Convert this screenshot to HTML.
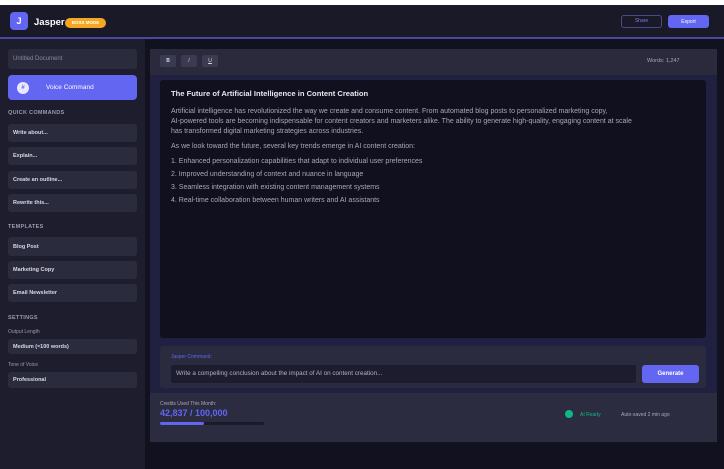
<!DOCTYPE html>
<html><head><style>
*{margin:0;padding:0;box-sizing:border-box}
body{width:724px;height:469px;background:#fff;font-family:"Liberation Sans",sans-serif;position:relative;overflow:hidden}
.a{position:absolute}
.hdr{left:0;top:5px;width:724px;height:32px;background:#191928}
.line{left:0;top:37px;width:724px;height:2px;background:#4a4a9a}
.side{left:0;top:39px;width:145px;height:430px;background:#1d1d2e}
.main{left:145px;top:39px;width:579px;height:430px;background:#11111f}
.item{left:8px;width:129px;background:#2b2b3e;border-radius:3px;color:#d8d8e4;font-size:5.5px;font-weight:bold;padding-left:5px;display:flex;align-items:center}
.lab{left:8px;color:#9a9ab0;font-size:5.5px;font-weight:bold;letter-spacing:.3px}
.p{color:#a8a8b8;font-size:7px;left:171px}
</style></head><body>
<div class="a hdr"></div>
<div class="a" style="left:10px;top:12px;width:18px;height:18px;background:#6366f1;border-radius:4px;color:#fff;font-size:9px;font-weight:bold;text-align:center;line-height:18px">J</div>
<div class="a" style="left:34px;top:17px;color:#fff;font-size:9.5px;font-weight:bold">Jasper</div>
<div class="a" style="left:65px;top:18px;width:41px;height:10px;background:#f5a623;border-radius:5px;color:#fff;font-size:4.5px;font-weight:bold;text-align:center;line-height:10px">BOSS MODE</div>
<div class="a" style="left:621px;top:15px;width:41px;height:13px;border:1px solid #4a4a8a;border-radius:3px;color:#7c7cf0;font-size:5px;text-align:center;line-height:11px;display:flex;align-items:center;justify-content:center">Share</div>
<div class="a" style="left:668px;top:15px;width:41px;height:13px;background:#6366f1;border-radius:3px;color:#fff;font-size:5px;display:flex;align-items:center;justify-content:center">Export</div>
<div class="a line"></div>
<div class="a side"></div>
<div class="a main"></div>

<div class="a item" style="top:49px;height:20px;color:#8a8aa0;font-weight:normal;font-size:6px">Untitled Document</div>
<div class="a" style="left:8px;top:75px;width:129px;height:25px;background:#6366f1;border-radius:4px"></div>
<div class="a" style="left:17px;top:82px;width:12px;height:12px;background:#e8e8ff;border-radius:50%;color:#6366f1;font-size:6px;text-align:center;line-height:12px;font-weight:bold">#</div>
<div class="a" style="left:46px;top:84px;color:#fff;font-size:6.5px">Voice Command</div>
<div class="a lab" style="top:110px">QUICK COMMANDS</div>
<div class="a item" style="top:124px;height:18px">Write about...</div>
<div class="a item" style="top:147px;height:18px">Explain...</div>
<div class="a item" style="top:171px;height:18px">Create an outline...</div>
<div class="a item" style="top:194px;height:18px">Rewrite this...</div>
<div class="a lab" style="top:224px">TEMPLATES</div>
<div class="a item" style="top:237px;height:19px">Blog Post</div>
<div class="a item" style="top:261px;height:18px">Marketing Copy</div>
<div class="a item" style="top:284px;height:18px">Email Newsletter</div>
<div class="a lab" style="top:315px">SETTINGS</div>
<div class="a" style="left:8px;top:329px;color:#9a9ab0;font-size:5px">Output Length</div>
<div class="a item" style="top:339px;height:15px">Medium (≈100 words)</div>
<div class="a" style="left:8px;top:362px;color:#9a9ab0;font-size:5px">Tone of Voice</div>
<div class="a item" style="top:372px;height:16px">Professional</div>

<div class="a" style="left:150px;top:49px;width:567px;height:26px;background:#2a2a3c"></div>
<div class="a" style="left:160px;top:55px;width:16px;height:12px;background:#3a3a50;border-radius:2px;color:#ddd;font-size:5px;font-weight:bold;text-align:center;line-height:12px">B</div>
<div class="a" style="left:181px;top:55px;width:16px;height:12px;background:#3a3a50;border-radius:2px;color:#ddd;font-size:5px;font-style:italic;text-align:center;line-height:12px">I</div>
<div class="a" style="left:202px;top:55px;width:16px;height:12px;background:#3a3a50;border-radius:2px;color:#ddd;font-size:5px;text-decoration:underline;text-align:center;line-height:12px">U</div>
<div class="a" style="left:647px;top:58px;color:#a8a8b8;font-size:5.5px">Words: 1,247</div>
<div class="a" style="left:150px;top:75px;width:567px;height:318px;background:#202040"></div>
<div class="a" style="left:160px;top:80px;width:546px;height:258px;background:#10101f;border-radius:3px"></div>
<div class="a" style="left:171px;top:89px;color:#e8e8f0;font-size:7.6px;font-weight:bold">The Future of Artificial Intelligence in Content Creation</div>
<div class="a p" style="top:107px;line-height:10px">Artificial intelligence has revolutionized the way we create and consume content. From automated blog posts to personalized marketing copy,<br>AI-powered tools are becoming indispensable for content creators and marketers alike. The ability to generate high-quality, engaging content at scale<br>has transformed digital marketing strategies across industries.</div>
<div class="a p" style="top:143px">As we look toward the future, several key trends emerge in AI content creation:</div>
<div class="a p" style="top:158px">1. Enhanced personalization capabilities that adapt to individual user preferences</div>
<div class="a p" style="top:171px">2. Improved understanding of context and nuance in language</div>
<div class="a p" style="top:184px">3. Seamless integration with existing content management systems</div>
<div class="a p" style="top:197px">4. Real-time collaboration between human writers and AI assistants</div>

<div class="a" style="left:160px;top:346px;width:546px;height:42px;background:#2b2b40;border-radius:3px"></div>
<div class="a" style="left:171px;top:354px;color:#6366f1;font-size:5px">Jasper Command:</div>
<div class="a" style="left:171px;top:365px;width:465px;height:18px;background:#1c1c2e;border-radius:2px;color:#b0b0c0;font-size:6.3px;padding-left:5px;line-height:18px">Write a compelling conclusion about the impact of AI on content creation...</div>
<div class="a" style="left:642px;top:365px;width:57px;height:18px;background:#6366f1;border-radius:3px;color:#fff;font-size:6px;font-weight:bold;text-align:center;line-height:18px">Generate</div>

<div class="a" style="left:150px;top:393px;width:567px;height:49px;background:#2c2c40"></div>
<div class="a" style="left:160px;top:401px;color:#a8a8b8;font-size:5px">Credits Used This Month:</div>
<div class="a" style="left:160px;top:408px;color:#6366f1;font-size:9px;font-weight:bold">42,837 / 100,000</div>
<div class="a" style="left:160px;top:422px;width:104px;height:3px;background:#1a1a2a;border-radius:2px"></div>
<div class="a" style="left:160px;top:422px;width:44px;height:3px;background:#6366f1;border-radius:2px"></div>
<div class="a" style="left:565px;top:410px;width:8px;height:8px;background:#10b981;border-radius:50%"></div>
<div class="a" style="left:580px;top:412px;color:#10b981;font-size:5px">AI Ready</div>
<div class="a" style="left:621px;top:412px;color:#a8a8b8;font-size:5px">Auto-saved 2 min ago</div>
</body></html>
